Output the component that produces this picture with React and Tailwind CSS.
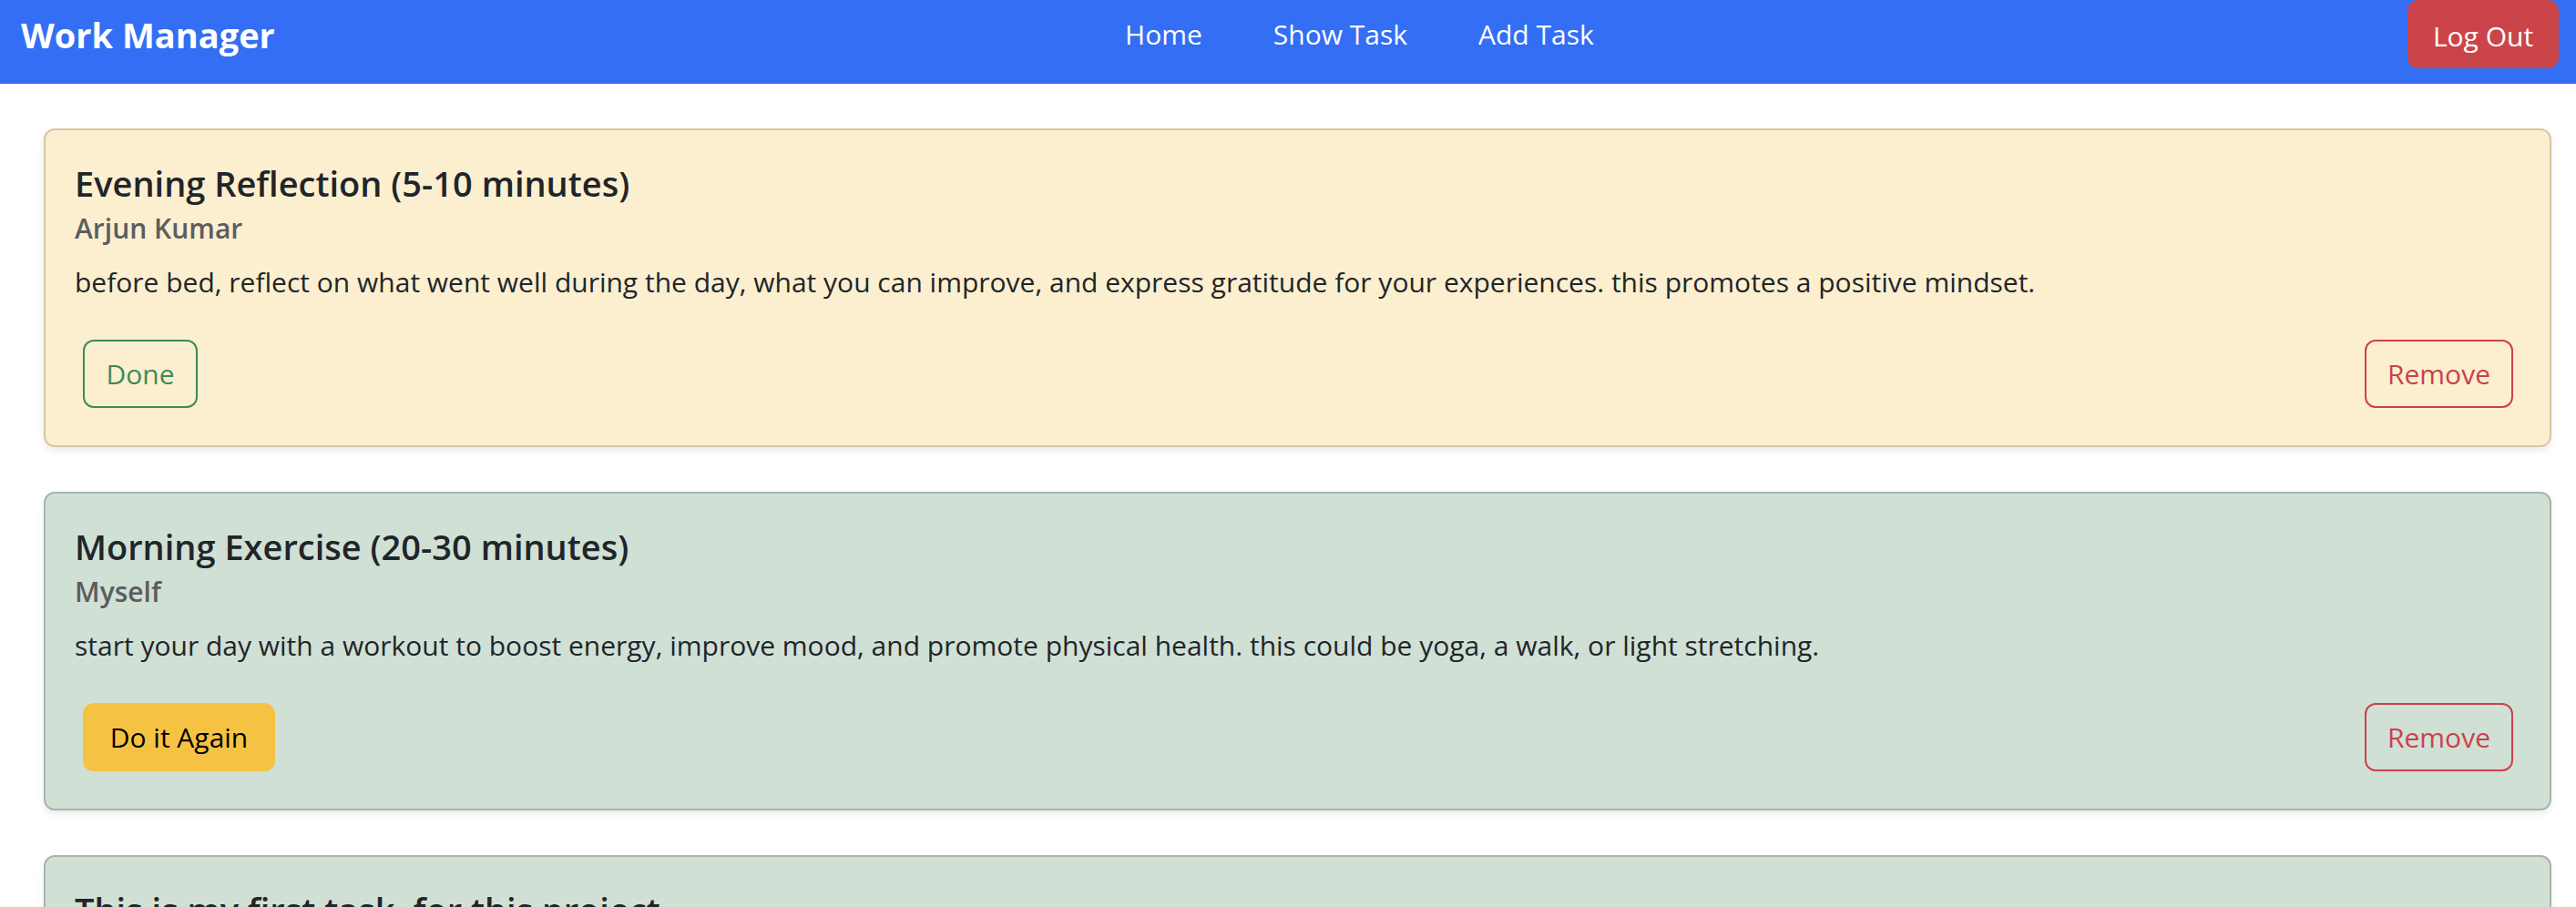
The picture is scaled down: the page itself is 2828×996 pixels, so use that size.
import React from "react";

const tasks = [
  {
    title: "Evening Reflection (5-10 minutes)",
    author: "Arjun Kumar",
    desc: "before bed, reflect on what went well during the day, what you can improve, and express gratitude for your experiences. this promotes a positive mindset.",
    done: false,
  },
  {
    title: "Morning Exercise (20-30 minutes)",
    author: "Myself",
    desc: "start your day with a workout to boost energy, improve mood, and promote physical health. this could be yoga, a walk, or light stretching.",
    done: true,
  },
  {
    title: "This is my first task, for this project",
    author: "Myself",
    desc: "this is the description of my first task.",
    done: true,
  },
];

function TaskCard({ task }) {
  const cardClass = task.done
    ? "mt-[49px] rounded-[12px] border-2 border-[#a9b5ab] bg-[#d0e0d5] shadow-[0_4px_8px_rgba(0,0,0,0.08)] px-[32px] pt-[35px] pb-[41px]"
    : "mt-[49px] rounded-[12px] border-2 border-[#d6c7a6] bg-[#fcefd0] shadow-[0_4px_8px_rgba(0,0,0,0.08)] px-[32px] pt-[35px] pb-[41px]";
  return (
    <div className={cardClass}>
      <h5 className="text-[38px] leading-[46px] font-semibold text-[#212529]">{task.title}</h5>
      <h6 className="mt-[7px] text-[30px] leading-[40px] font-semibold text-[#5b5d5f]">{task.author}</h6>
      <p className="mt-[15px] text-[30px] leading-[48px] text-[#212529]">{task.desc}</p>
      <div className="mt-[39px] flex items-center justify-between pl-[9px] pr-[8px]">
        {task.done ? (
          <button className="w-[211px] h-[75px] rounded-[12px] border-2 border-[#f6c244] bg-[#f6c244] text-black text-[30px] leading-[48px] flex items-center justify-center">
            Do it Again
          </button>
        ) : (
          <button className="w-[126px] h-[75px] rounded-[12px] border-2 border-[#3c8a5c] text-[#3c8a5c] text-[30px] leading-[48px] flex items-center justify-center">
            Done
          </button>
        )}
        <button className="w-[163px] h-[75px] rounded-[12px] border-2 border-[#cc4149] text-[#cc4149] text-[30px] leading-[48px] flex items-center justify-center">
          Remove
        </button>
      </div>
    </div>
  );
}

export default function App() {
  return (
    <div className="h-screen overflow-hidden bg-white font-['Open_Sans',sans-serif]">
      <header className="h-[92px] bg-[#336ef4] flex items-start justify-between pl-[23px] pr-[19px]">
        <div className="pt-[14px] text-[38px] leading-[48px] font-bold text-white">Work Manager</div>
        <nav className="flex gap-[44px] pt-[14px] pl-[40px]">
          <a className="px-[17px] text-[30px] leading-[48px] text-white">Home</a>
          <a className="px-[17px] text-[30px] leading-[48px] text-white">Show Task</a>
          <a className="px-[17px] text-[30px] leading-[48px] text-white">Add Task</a>
        </nav>
        <button className="w-[166px] h-[75px] rounded-[12px] bg-[#cb444a] text-white text-[30px] leading-[48px] pt-[4px] text-center block">
          Log Out
        </button>
      </header>
      <main className="pl-[48px] pr-[27px]">
        {tasks.map((t, i) => (
          <TaskCard key={i} task={t} />
        ))}
      </main>
    </div>
  );
}
